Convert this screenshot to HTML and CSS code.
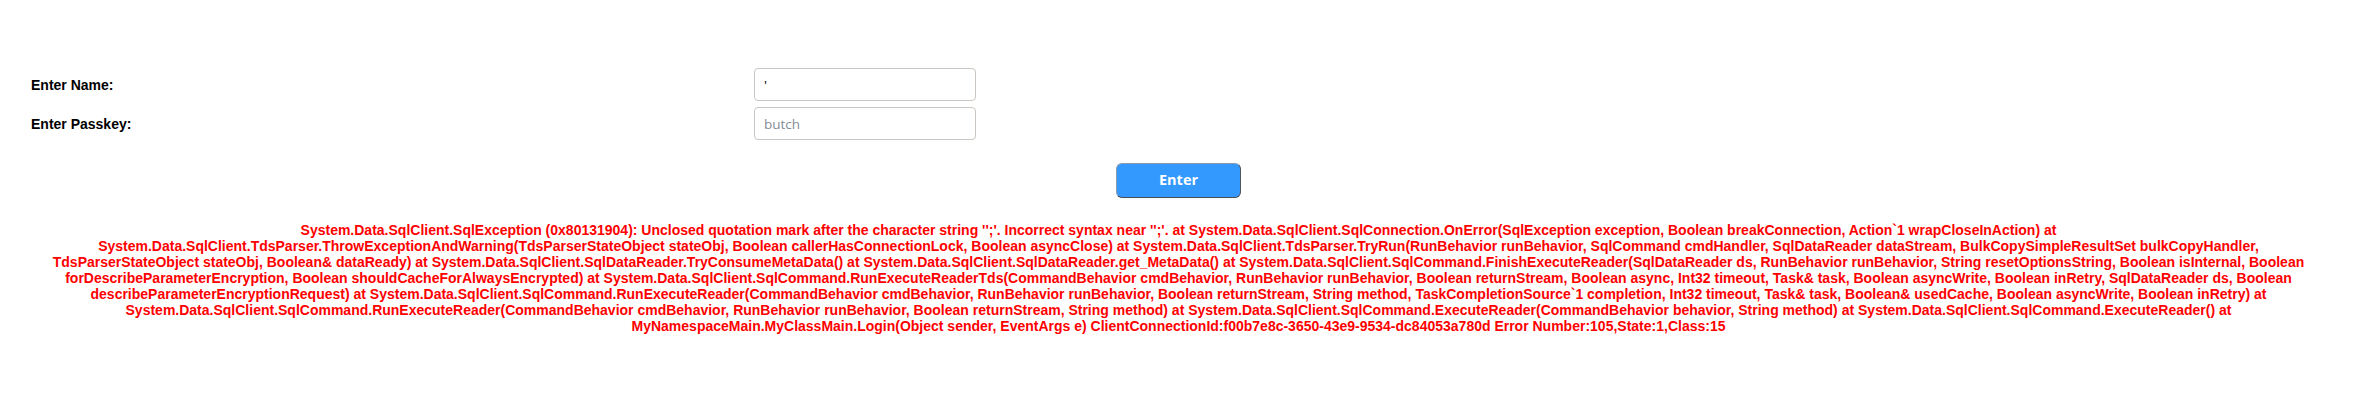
FILE: index.html
```html
<!DOCTYPE html>
<html lang="en">
<head>
<meta charset="utf-8">
<title>Login</title>
<link rel="stylesheet" href="styles.css">
</head>
<body>
<div class="page">
  <form class="login-form">
    <div class="fields">
      <label class="field-label" for="name">Enter Name:</label>
      <input class="field-input" id="name" type="text" value="'">
      <label class="field-label" for="passkey">Enter Passkey:</label>
      <input class="field-input" id="passkey" type="text" placeholder="butch">
    </div>
    <div class="actions">
      <button class="enter-btn" type="button">Enter</button>
    </div>
  </form>
  <p class="error-msg">System.Data.SqlClient.SqlException (0x80131904): Unclosed quotation mark after the character string '';'. Incorrect syntax near '';'. at System.Data.SqlClient.SqlConnection.OnError(SqlException exception, Boolean breakConnection, Action`1 wrapCloseInAction) at System.Data.SqlClient.TdsParser.ThrowExceptionAndWarning(TdsParserStateObject stateObj, Boolean callerHasConnectionLock, Boolean asyncClose) at System.Data.SqlClient.TdsParser.TryRun(RunBehavior runBehavior, SqlCommand cmdHandler, SqlDataReader dataStream, BulkCopySimpleResultSet bulkCopyHandler, TdsParserStateObject stateObj, Boolean&amp; dataReady) at System.Data.SqlClient.SqlDataReader.TryConsumeMetaData() at System.Data.SqlClient.SqlDataReader.get_MetaData() at System.Data.SqlClient.SqlCommand.FinishExecuteReader(SqlDataReader ds, RunBehavior runBehavior, String resetOptionsString, Boolean isInternal, Boolean forDescribeParameterEncryption, Boolean shouldCacheForAlwaysEncrypted) at System.Data.SqlClient.SqlCommand.RunExecuteReaderTds(CommandBehavior cmdBehavior, RunBehavior runBehavior, Boolean returnStream, Boolean async, Int32 timeout, Task&amp; task, Boolean asyncWrite, Boolean inRetry, SqlDataReader ds, Boolean describeParameterEncryptionRequest) at System.Data.SqlClient.SqlCommand.RunExecuteReader(CommandBehavior cmdBehavior, RunBehavior runBehavior, Boolean returnStream, String method, TaskCompletionSource`1 completion, Int32 timeout, Task&amp; task, Boolean&amp; usedCache, Boolean asyncWrite, Boolean inRetry) at System.Data.SqlClient.SqlCommand.RunExecuteReader(CommandBehavior cmdBehavior, RunBehavior runBehavior, Boolean returnStream, String method) at System.Data.SqlClient.SqlCommand.ExecuteReader(CommandBehavior behavior, String method) at System.Data.SqlClient.SqlCommand.ExecuteReader() at MyNamespaceMain.MyClassMain.Login(Object sender, EventArgs e) ClientConnectionId:f00b7e8c-3650-43e9-9534-dc84053a780d Error Number:105,State:1,Class:15</p>
</div>
</body>
</html>
```

FILE: styles.css
```css
html, body {
  margin: 0;
  padding: 0;
  background: #ffffff;
}

body {
  font-family: "Liberation Sans", Arial, sans-serif;
  color: #000000;
}

.page {
  padding: 68px 16px 0 8px;
}

.login-form {
  margin: 0;
}

.fields {
  display: grid;
  grid-template-columns: 723px 222px;
  row-gap: 6px;
  align-items: center;
  padding-left: 23px;
}

.field-label {
  font-family: "Liberation Sans", Arial, sans-serif;
  font-weight: 700;
  font-size: 14px;
  line-height: 16px;
  padding-top: 1px;
}

.field-input {
  box-sizing: border-box;
  width: 222px;
  height: 33px;
  margin: 0;
  padding: 0 9px;
  border: 1px solid #cbc6c2;
  border-radius: 4px;
  background: #ffffff;
  font-family: "Open Sans", sans-serif;
  font-size: 13.5px;
  color: #000000;
  outline: none;
}

.field-input::placeholder {
  color: #858c96;
  opacity: 1;
}

.actions {
  display: flex;
  justify-content: center;
  margin-top: 23px;
}

.enter-btn {
  box-sizing: border-box;
  width: 125px;
  height: 35px;
  margin: 0;
  padding: 0;
  background: #3399ff;
  border: 1px solid #8a9bb0;
  border-right-color: #4d5561;
  border-bottom-color: #4a4f57;
  border-radius: 6px;
  color: #ffffff;
  font-family: "Open Sans", sans-serif;
  font-weight: 700;
  font-size: 14.5px;
  line-height: 1;
  cursor: pointer;
}

.error-msg {
  margin: 24px 0 0 0;
  padding: 0 44px;
  text-align: center;
  color: #ff0000;
  font-family: "Liberation Sans", Arial, sans-serif;
  font-weight: 700;
  font-size: 14px;
  line-height: 16px;
}
```
